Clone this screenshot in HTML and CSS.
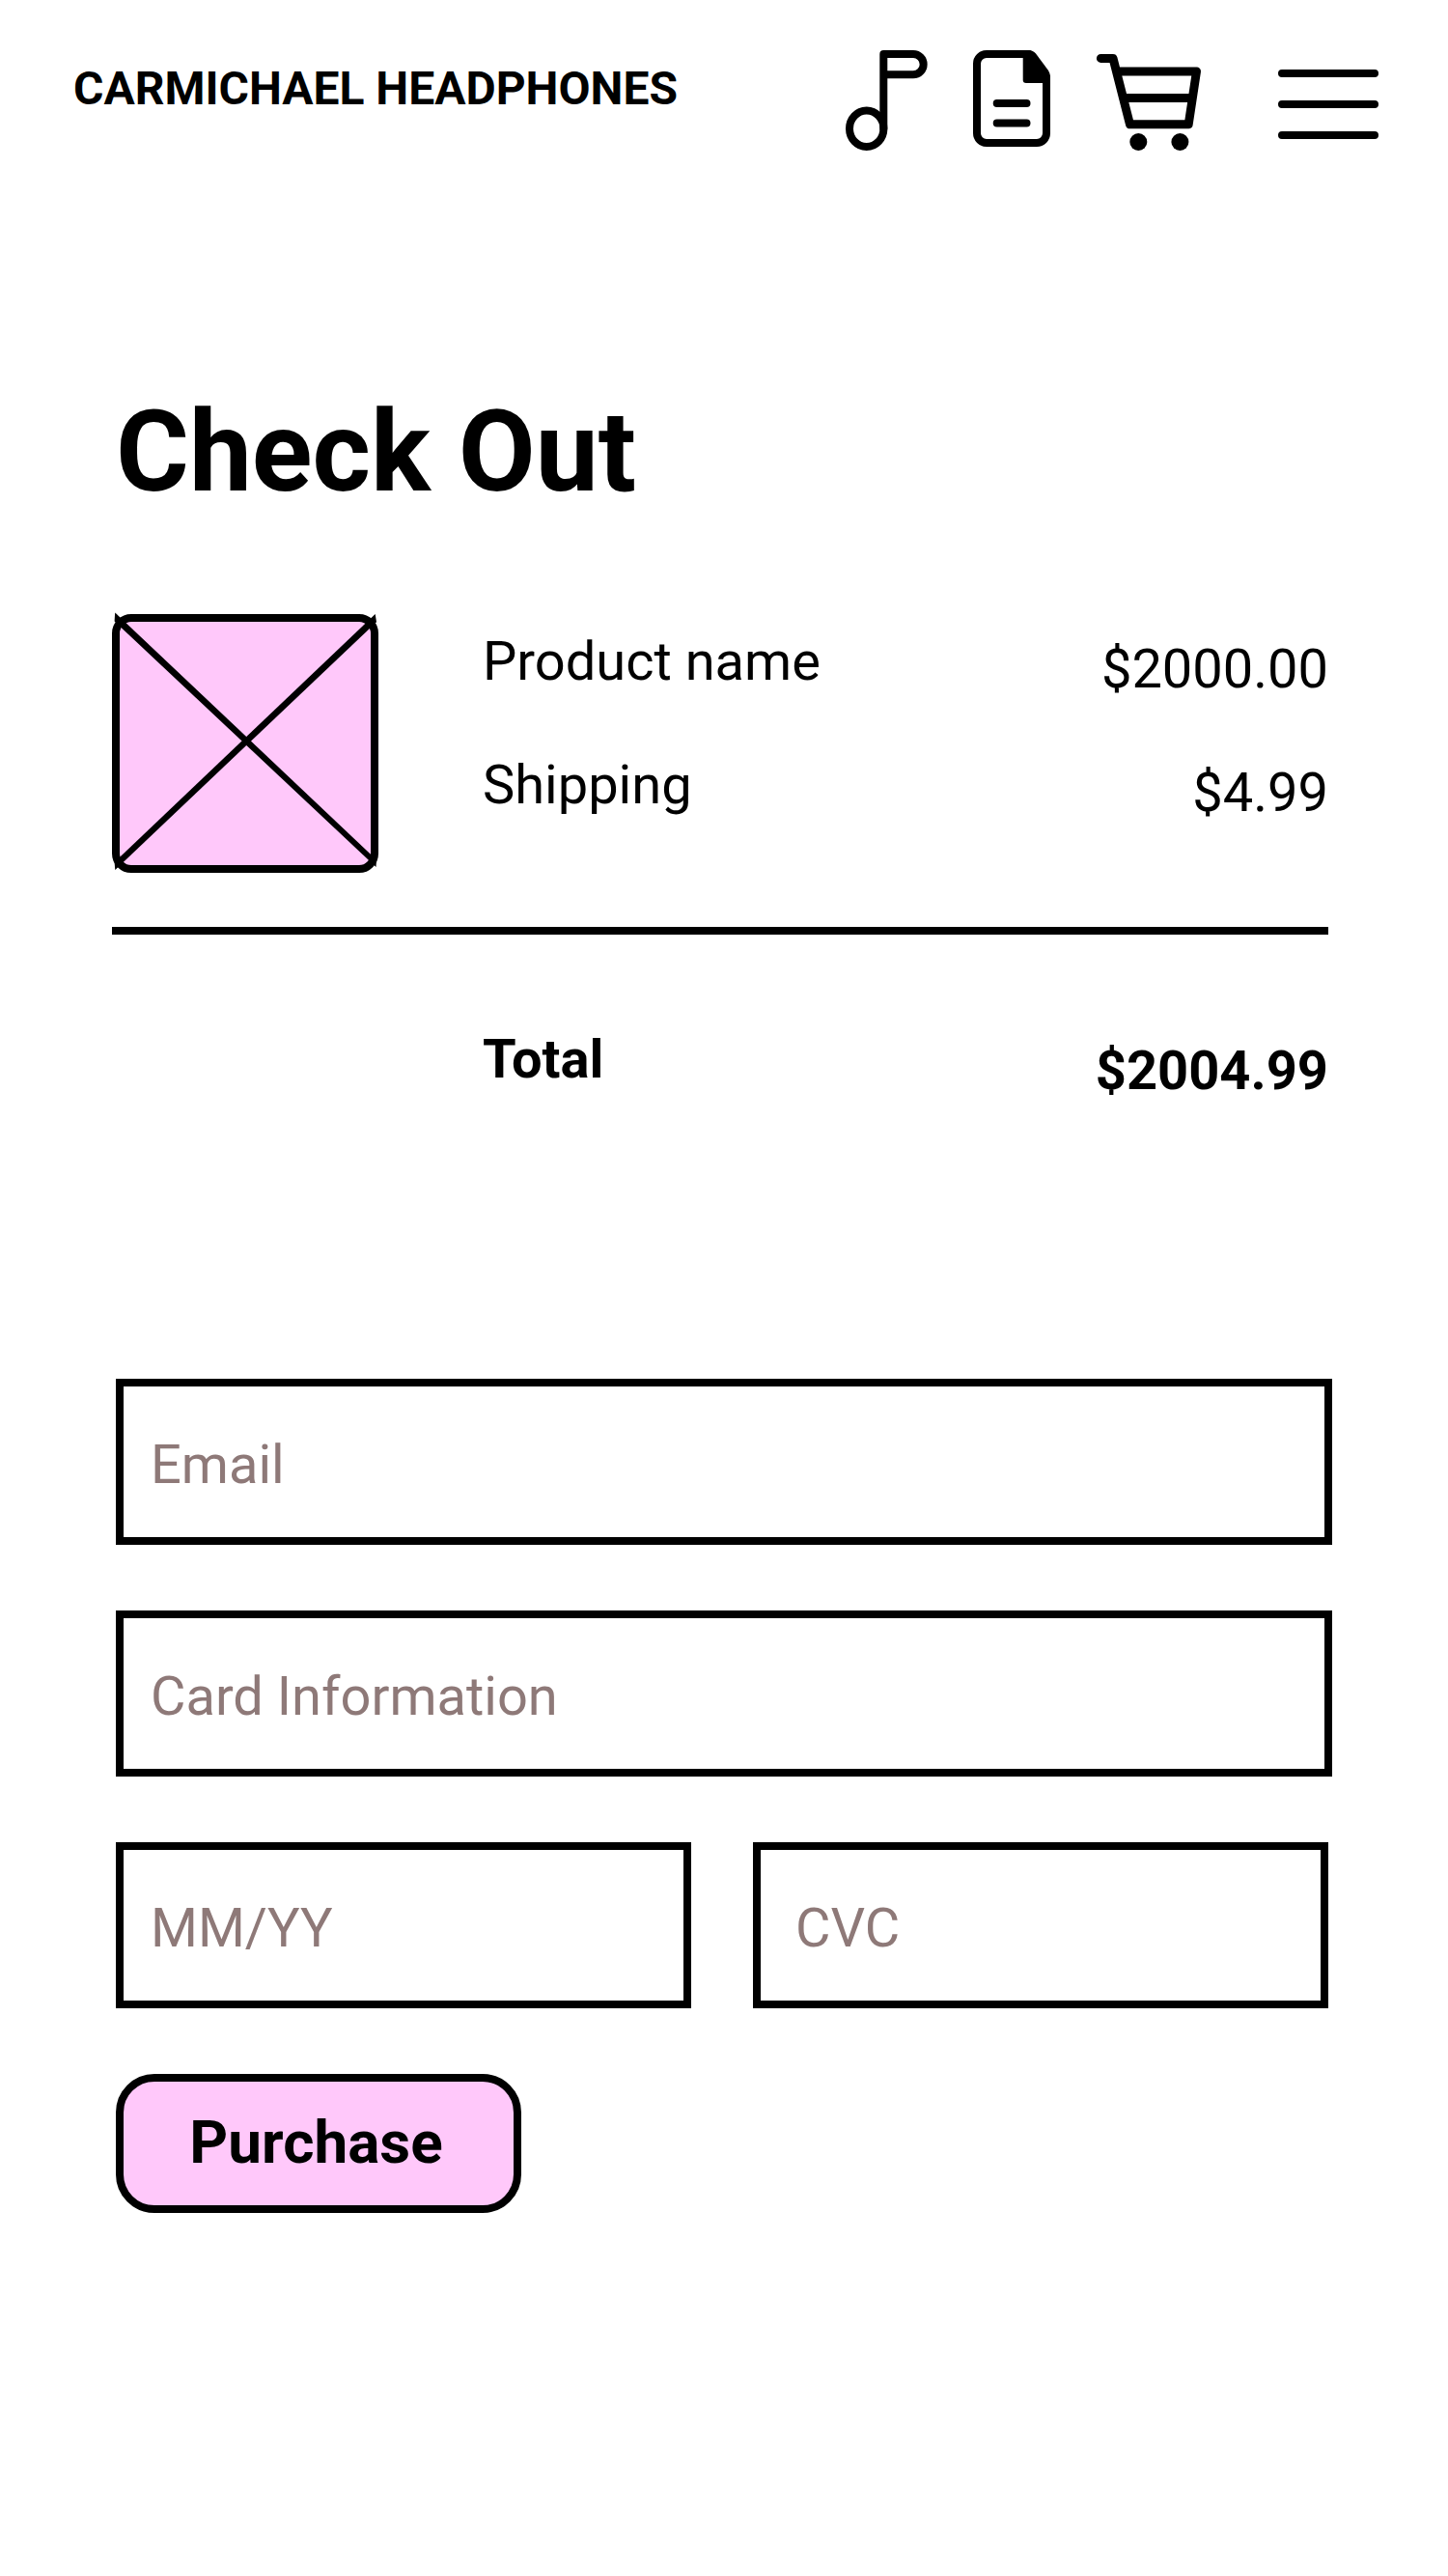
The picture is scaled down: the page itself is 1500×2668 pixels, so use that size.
FILE: index.html
```html
<!DOCTYPE html>
<html lang="en">
<head>
<meta charset="utf-8">
<title>Carmichael Headphones – Check Out</title>
<link rel="stylesheet" href="styles.css">
</head>
<body>
<header class="topbar">
  <div class="brand">CARMICHAEL HEADPHONES</div>
  <nav class="nav">
    <svg class="icon note" viewBox="876 52 84 104" aria-label="Music">
      <path d="M915.3 133V56H946a10.6 10.6 0 0 1 0 21.3H915.3"/>
      <ellipse cx="897.7" cy="133.2" rx="17.7" ry="18.8"/>
    </svg>
    <svg class="icon doc" viewBox="1008 52 80 100" aria-label="Articles">
      <path d="M1065.5 56H1022a10 10 0 0 0-10 10V138a10 10 0 0 0 10 10H1074a10 10 0 0 0 10-10V80"/>
      <path class="solid" d="M1059.7 52H1066Q1070 52 1073 55.5L1086 73Q1088 76 1088 80V86H1063Q1059.7 86 1059.7 83Z"/>
      <path d="M1032.7 107H1063.5M1032.7 127.4H1063.5"/>
    </svg>
    <svg class="icon cart" viewBox="1136 52 108 104" aria-label="Cart">
      <path d="M1140.4 60.4H1153L1170.5 128.8H1231.2L1239.5 73.9H1157M1165 101.4H1235"/>
      <circle class="solid" cx="1179.3" cy="147" r="9"/>
      <circle class="solid" cx="1222.4" cy="147" r="9"/>
    </svg>
    <svg class="icon menu" viewBox="1324 72 104 72" aria-label="Menu">
      <path d="M1328 76H1424M1328 108H1424M1328 140H1424"/>
    </svg>
  </nav>
</header>
<main class="checkout">
  <h1 class="title">Check Out</h1>
  <section class="summary">
    <svg class="thumb" viewBox="0 0 276 268" aria-label="Product image">
      <rect x="4" y="4" width="268" height="260" rx="16"/>
      <path d="M3.200-1.500L274 254.500L273.500 262L2.600 7.500Z"/>
      <path d="M272.700 0L274 8.300L3.300 265L2.600 257Z"/>
    </svg>
    <dl class="lines">
      <div class="line"><dt>Product name</dt><dd>$2000.00</dd></div>
      <div class="line"><dt>Shipping</dt><dd>$4.99</dd></div>
    </dl>
  </section>
  <div class="total"><span>Total</span><span class="sum">$2004.99</span></div>
  <form class="payment">
    <div class="field">Email</div>
    <div class="field">Card Information</div>
    <div class="pair">
      <div class="field">MM/YY</div>
      <div class="field cvc">CVC</div>
    </div>
    <button class="purchase" type="button">Purchase</button>
  </form>
</main>
</body>
</html>
```
FILE: styles.css
```css
* { box-sizing: border-box; }

body {
  margin: 0;
  min-height: 2668px;
  background: #fff;
  color: #000;
  font-family: Roboto, "Liberation Sans", sans-serif;
  font-size: 56px;
  line-height: 64px;
}

.topbar {
  display: flex;
  justify-content: space-between;
  align-items: flex-start;
  height: 160px;
  padding: 52px 72px 0 76px;
}

.brand {
  margin-top: 12px;
  font-size: 48px;
  font-weight: 700;
  line-height: 56px;
}

.nav { display: flex; }

.icon {
  display: block;
  overflow: visible;
  fill: none;
  stroke: #000;
  stroke-width: 8;
  stroke-linecap: round;
  stroke-linejoin: round;
}
.icon .solid { fill: #000; stroke: none; }
.note { width: 84px; height: 104px; margin-right: 48px; }
.doc { width: 80px; height: 100px; margin-right: 48px; }
.cart { width: 108px; height: 104px; margin-right: 80px; stroke-width: 9; }
.menu { width: 104px; height: 72px; margin-top: 20px; }

.checkout { padding: 240px 120px 0; }

.title {
  margin: 0;
  font-size: 116px;
  font-weight: 700;
  line-height: 136px;
}

.summary {
  display: flex;
  gap: 108px;
  width: 1260px;
  height: 332px;
  margin: 100px 0 0 -4px;
  border-bottom: 8px solid #000;
}

.thumb {
  flex: none;
  width: 276px;
  height: 268px;
  overflow: visible;
}
.thumb rect { fill: #ffc8fa; stroke: #000; stroke-width: 8; }
.thumb path { fill: #000; }

.lines { flex: 1; margin: 17px 0 0; }
.line { display: flex; justify-content: space-between; height: 128px; }
.line dd { margin: 8px 0 0; }

.total {
  display: flex;
  justify-content: space-between;
  width: 1256px;
  padding: 97px 0 0 380px;
  font-weight: 700;
}
.sum { margin-top: 12px; }

.payment {
  display: grid;
  gap: 68px;
  margin-top: 287px;
}

.field {
  height: 172px;
  padding: 49px 28px 43px;
  border: 8px solid #000;
  color: #8e7978;
}

.pair {
  display: grid;
  grid-template-columns: 1fr 1fr;
  gap: 64px;
  width: 1256px;
}
.cvc { padding-left: 36px; }

.purchase {
  width: 420px;
  height: 144px;
  padding: 0 5px 2px 0;
  border: 8px solid #000;
  border-radius: 40px;
  background: #ffc8fa;
  color: #000;
  font: 700 62px/72px Roboto, "Liberation Sans", sans-serif;
}
```
